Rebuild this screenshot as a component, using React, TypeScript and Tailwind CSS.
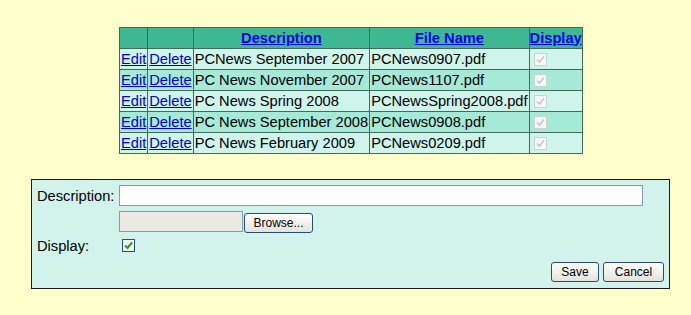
const rows = [
  { desc: "PCNews September 2007", file: "PCNews0907.pdf" },
  { desc: "PC News November 2007", file: "PCNews1107.pdf" },
  { desc: "PC News Spring 2008", file: "PCNewsSpring2008.pdf" },
  { desc: "PC News September 2008", file: "PCNews0908.pdf" },
  { desc: "PC News February 2009", file: "PCNews0209.pdf" },
];

function DisabledCheck() {
  return (
    <span className="inline-flex h-[13px] w-[13px] items-center justify-center border border-[#c9d3cf] bg-[#f4f7f6]">
      <svg width="9" height="9" viewBox="0 0 9 9">
        <path d="M1 4.5 L3.5 7 L8 1.5" stroke="#c3c9c6" strokeWidth="1.6" fill="none" />
      </svg>
    </span>
  );
}

function XpButton({ label, w }: { label: string; w: string }) {
  return (
    <button
      className={`${w} h-[20px] rounded-[3px] border border-[#2a4d6e] bg-gradient-to-b from-white to-[#e4e2da] text-[12px] leading-none text-black`}
    >
      {label}
    </button>
  );
}

export default function App() {
  return (
    <div className="min-h-[315px] w-[691px] bg-[#ffffcc] pt-[27px] font-['Liberation_Sans',Arial,sans-serif] text-black">
      <table className="ml-[119px] table-fixed border-collapse border border-[#3f6b5c] text-[14.67px] leading-[19px]">
        <colgroup>
          <col className="w-[28px]" />
          <col className="w-[45px]" />
          <col className="w-[176px]" />
          <col className="w-[159px]" />
          <col className="w-[53px]" />
        </colgroup>
        <thead>
          <tr className="h-[21px] bg-[#3fb792]">
            <th className="border border-[#3f6b5c]" />
            <th className="border border-[#3f6b5c]" />
            <th className="border border-[#3f6b5c] p-0 text-center font-bold">
              <a className="text-[#0000ee] underline">Description</a>
            </th>
            <th className="border border-[#3f6b5c] p-0 text-center font-bold">
              <a className="text-[#0000ee] underline">File Name</a>
            </th>
            <th className="border border-[#3f6b5c] p-0 text-center font-bold">
              <a className="text-[#0000ee] underline">Display</a>
            </th>
          </tr>
        </thead>
        <tbody>
          {rows.map((r, i) => (
            <tr key={r.file} className={`h-[21px] ${i % 2 === 0 ? "bg-[#cff4ea]" : "bg-[#a6e9d7]"}`}>
              <td className="border border-[#3f6b5c] px-[1px] py-0">
                <a className="text-[#0000cc] underline">Edit</a>
              </td>
              <td className="border border-[#3f6b5c] px-[1px] py-0">
                <a className="text-[#0000cc] underline">Delete</a>
              </td>
              <td className="overflow-hidden whitespace-nowrap border border-[#3f6b5c] px-[1px] py-0">{r.desc}</td>
              <td className="overflow-hidden whitespace-nowrap border border-[#3f6b5c] px-[1px] py-0">{r.file}</td>
              <td className="border border-[#3f6b5c] py-0 pl-[4px]">
                <div className="flex items-center">
                  <DisabledCheck />
                </div>
              </td>
            </tr>
          ))}
        </tbody>
      </table>

      <div className="ml-[31px] mt-[25px] flex w-[639px] flex-col border border-[#1a1a1a] bg-[#d1f3ec] pb-[6px] pl-[5px] pr-[5px] pt-[5px] text-[14.67px]">
        <div className="flex h-[21px] items-center">
          <span className="w-[82px]">Description:</span>
          <div className="h-[21px] w-[524px] border border-[#7f9db9] bg-white" />
        </div>
        <div className="mt-[5px] flex h-[21px] items-center">
          <span className="w-[82px]" />
          <div className="h-[21px] w-[124px] border border-[#7f9db9] bg-[#ebe9e3]" />
          <div className="ml-[1px]">
            <XpButton label="Browse..." w="w-[69px]" />
          </div>
        </div>
        <div className="mt-[6px] flex h-[15px] items-center">
          <span className="w-[82px]">Display:</span>
          <span className="ml-[3px] inline-flex h-[13px] w-[13px] items-center justify-center border border-[#1c5180] bg-[#f2f5f4]">
            <svg width="9" height="9" viewBox="0 0 9 9">
              <path d="M1 4.5 L3.5 7 L8 1.5" stroke="#21a121" strokeWidth="2" fill="none" />
            </svg>
          </span>
        </div>
        <div className="mt-[9px] flex justify-end gap-[4px]">
          <XpButton label="Save" w="w-[48px]" />
          <XpButton label="Cancel" w="w-[61px]" />
        </div>
      </div>
    </div>
  );
}
